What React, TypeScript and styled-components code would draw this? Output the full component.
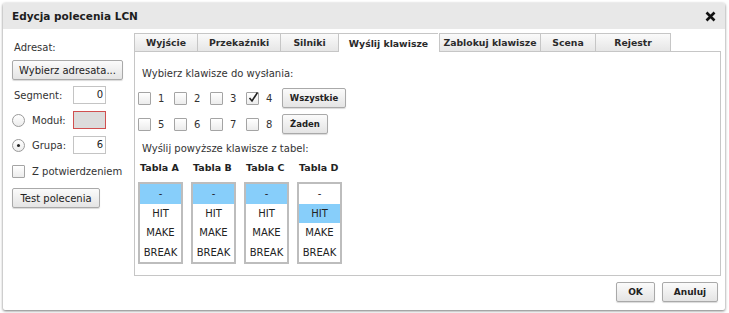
import styled, { createGlobalStyle } from 'styled-components';

const GlobalStyle = createGlobalStyle`
  html, body {
    margin: 0;
    padding: 0;
    background: #ffffff;
  }
  body {
    font-family: 'DejaVu Sans', Verdana, sans-serif;
    font-size: 10px;
    color: #222;
  }
`;

const Page = styled.div`
  padding: 3px 4px 3px 3px;
  width: 729px;
  height: 313px;
  box-sizing: border-box;
`;

const Dialog = styled.div`
  display: flex;
  flex-direction: column;
  width: 722px;
  height: 307px;
  background: #fff;
  box-shadow: 0 1px 3px rgba(0, 0, 0, 0.55);
  border-radius: 2px;
  overflow: hidden;
`;

const Header = styled.div`
  display: flex;
  align-items: center;
  justify-content: space-between;
  height: 26px;
  padding: 0 9px 0 9px;
  background: #e8e8e8;
  font-weight: bold;
  font-size: 10.5px;
  color: #1d1d1d;
`;

const Body = styled.div`
  flex: 1;
  display: flex;
  gap: 11px;
  padding: 4px 4px 0 9px;
`;

const Side = styled.div`
  width: 111px;
  display: flex;
  flex-direction: column;
  align-items: flex-start;
  padding-top: 9px;
`;

const Label = styled.div`
  color: #333;
  padding-left: 2px;
  height: 13px;
`;

const Button = styled.button<{ $w?: number; $bold?: boolean; $mt?: number }>`
  width: ${(p) => (p.$w ? `${p.$w}px` : 'auto')};
  height: 20px;
  margin-top: ${(p) => p.$mt ?? 0}px;
  padding: 0;
  white-space: nowrap;
  font-family: inherit;
  font-size: ${(p) => (p.$bold ? '8.5px' : '10px')};
  font-weight: ${(p) => (p.$bold ? 'bold' : 'normal')};
  color: #222;
  background: linear-gradient(#fbfbfb, #e4e4e4);
  border: 1px solid #a9a9a9;
  border-radius: 2px;
  box-shadow: 0 1px 1px rgba(0, 0, 0, 0.15);
`;

const FieldRow = styled.div<{ $mt: number }>`
  display: flex;
  align-items: center;
  height: 18px;
  margin-top: ${(p) => p.$mt}px;
`;

const FieldLabel = styled.span`
  width: 61px;
  box-sizing: border-box;
  display: flex;
  align-items: center;
  gap: 7px;
  color: #333;
  padding-left: 2px;
`;

const Input = styled.div<{ $invalid?: boolean }>`
  width: 29px;
  height: 16px;
  border: 1px solid ${(p) => (p.$invalid ? '#d05050' : '#c4c4c4')};
  background: ${(p) => (p.$invalid ? '#dcdcdc' : '#fff')};
  text-align: right;
  line-height: 16px;
  padding-right: 2px;
  font-size: 10px;
`;

const Radio = styled.span<{ $on?: boolean }>`
  position: relative;
  width: 11px;
  height: 11px;
  margin-left: -2px;
  border: 1px solid #9a9a9a;
  border-radius: 50%;
  background: linear-gradient(#fff, #ececec);
  &::after {
    content: '';
    display: ${(p) => (p.$on ? 'block' : 'none')};
    position: absolute;
    left: 4px;
    top: 4px;
    width: 3px;
    height: 3px;
    border-radius: 50%;
    background: #222;
  }
`;

const Box = styled.span`
  position: relative;
  display: inline-block;
  width: 11px;
  height: 11px;
  border: 1px solid #a4a4a4;
  border-radius: 1px;
  background: linear-gradient(#fff, #ececec);
  flex-shrink: 0;
`;

const Check = styled.svg`
  position: absolute;
  left: 0;
  top: -2px;
`;

const CheckRow = styled.div`
  display: flex;
  align-items: center;
  gap: 7px;
  color: #333;
  margin-top: 11px;
`;

const Main = styled.div`
  flex: 1;
  display: flex;
  flex-direction: column;
`;

const Tabs = styled.div`
  display: flex;
  height: 19px;
`;

const Tab = styled.div<{ $w: number; $active?: boolean; $gap?: number }>`
  width: ${(p) => p.$w}px;
  margin-left: ${(p) => p.$gap ?? 0}px;
  display: flex;
  align-items: center;
  justify-content: center;
  font-weight: bold;
  font-size: 9.3px;
  color: #2b2b2b;
  box-sizing: border-box;
  border: 1px solid #c6c6c6;
  border-right: none;
  border-bottom: ${(p) => (p.$active ? 'none' : '1px solid #c6c6c6')};
  background: ${(p) => (p.$active ? '#fff' : 'linear-gradient(#fafafa, #e6e6e6)')};
  &:nth-child(7) {
    border-right: 1px solid #c6c6c6;
  }
`;

const TabFill = styled.div`
  flex: 1;
  border-bottom: 1px solid #c6c6c6;
`;

const Panel = styled.div`
  height: 224px;
  box-sizing: border-box;
  border: 1px solid #c6c6c6;
  border-top: none;
  padding: 16px 0 0 3px;
`;

const Text = styled.div<{ $mt?: number }>`
  color: #333;
  margin-top: ${(p) => p.$mt ?? 0}px;
  padding-left: 4px;
`;

const KeyRow = styled.div<{ $mt: number }>`
  display: flex;
  align-items: center;
  height: 20px;
  margin-top: ${(p) => p.$mt}px;
`;

const Key = styled.label`
  display: flex;
  align-items: center;
  gap: 7px;
  width: 36px;
  color: #333;
`;

const Tables = styled.div`
  display: flex;
  gap: 8px;
  margin-top: 8px;
`;

const TableCol = styled.div`
  width: 45px;
  display: flex;
  flex-direction: column;
`;

const TableTitle = styled.div`
  font-weight: bold;
  font-size: 9.5px;
  color: #222;
  white-space: nowrap;
  padding-left: 2px;
  height: 14px;
`;

const List = styled.div`
  margin-top: 6px;
  border: 2px solid #bdbdbd;
  background: #fff;
`;

const Item = styled.div<{ $sel?: boolean }>`
  height: 19.5px;
  line-height: 19.5px;
  text-align: center;
  font-size: 10px;
  color: #222;
  background: ${(p) => (p.$sel ? '#87cefa' : '#fff')};
`;

const Footer = styled.div`
  display: flex;
  justify-content: flex-end;
  gap: 7px;
  padding: 6px 7px 8px 0;
`;

const tabs = [
  { name: 'Wyjście', w: 63 },
  { name: 'Przekaźniki', w: 83 },
  { name: 'Silniki', w: 58 },
  { name: 'Wyślij klawisze', w: 100, active: true },
  { name: 'Zablokuj klawisze', w: 101, gap: 1 },
  { name: 'Scena', w: 55 },
  { name: 'Rejestr', w: 76 },
];

const tables = [
  { name: 'Tabla A', sel: 0 },
  { name: 'Tabla B', sel: 0 },
  { name: 'Tabla C', sel: 0 },
  { name: 'Tabla D', sel: 1 },
];

const items = ['-', 'HIT', 'MAKE', 'BREAK'];

function CheckBox({ on }: { on?: boolean }) {
  return (
    <Box>
      {on && (
        <Check width='13' height='13' viewBox='0 0 13 13'>
          <path d='M2.5 7 L5 10 L10.5 1.5' fill='none' stroke='#222' strokeWidth='1.6' />
        </Check>
      )}
    </Box>
  );
}

function KeyGroup({ keys, checked, children }: { keys: number[]; checked?: number; children: React.ReactNode }) {
  return (
    <>
      {keys.map((k) => (
        <Key key={k}>
          <CheckBox on={k === checked} />
          {k}
        </Key>
      ))}
      {children}
    </>
  );
}

export default function App() {
  return (
    <Page>
      <GlobalStyle />
      <Dialog>
        <Header>
          Edycja polecenia LCN
          <svg width='11' height='11' viewBox='0 0 11 11'>
            <path d='M1.5 1.5 L9.5 9.5 M9.5 1.5 L1.5 9.5' stroke='#111' strokeWidth='2.6' strokeLinecap='butt' />
          </svg>
        </Header>
        <Body>
          <Side>
            <Label>Adresat:</Label>
            <Button $w={111} $mt={5}>Wybierz adresata...</Button>
            <FieldRow $mt={6}>
              <FieldLabel>Segment:</FieldLabel>
              <Input>0</Input>
            </FieldRow>
            <FieldRow $mt={7}>
              <FieldLabel>
                <Radio />
                Moduł:
              </FieldLabel>
              <Input $invalid />
            </FieldRow>
            <FieldRow $mt={7}>
              <FieldLabel>
                <Radio $on />
                Grupa:
              </FieldLabel>
              <Input>6</Input>
            </FieldRow>
            <CheckRow>
              <CheckBox />
              Z potwierdzeniem
            </CheckRow>
            <Button $w={88} $mt={10}>Test polecenia</Button>
          </Side>
          <Main>
            <Tabs>
              {tabs.map((t) => (
                <Tab key={t.name} $w={t.w} $active={t.active} $gap={t.gap}>
                  {t.name}
                </Tab>
              ))}
              <TabFill />
            </Tabs>
            <Panel>
              <Text>Wybierz klawisze do wysłania:</Text>
              <KeyRow $mt={9}>
                <KeyGroup keys={[1, 2, 3, 4]} checked={4}>
                  <Button $w={64} $bold>Wszystkie</Button>
                </KeyGroup>
              </KeyRow>
              <KeyRow $mt={6}>
                <KeyGroup keys={[5, 6, 7, 8]}>
                  <Button $w={46} $bold>Żaden</Button>
                </KeyGroup>
              </KeyRow>
              <Text $mt={9}>Wyślij powyższe klawisze z tabel:</Text>
              <Tables>
                {tables.map((t) => (
                  <TableCol key={t.name}>
                    <TableTitle>{t.name}</TableTitle>
                    <List>
                      {items.map((it, i) => (
                        <Item key={it} $sel={i === t.sel}>
                          {it}
                        </Item>
                      ))}
                    </List>
                  </TableCol>
                ))}
              </Tables>
            </Panel>
          </Main>
        </Body>
        <Footer>
          <Button $w={39} $bold style={{ fontSize: 9 }}>OK</Button>
          <Button $w={56} $bold style={{ fontSize: 9 }}>Anuluj</Button>
        </Footer>
      </Dialog>
    </Page>
  );
}
